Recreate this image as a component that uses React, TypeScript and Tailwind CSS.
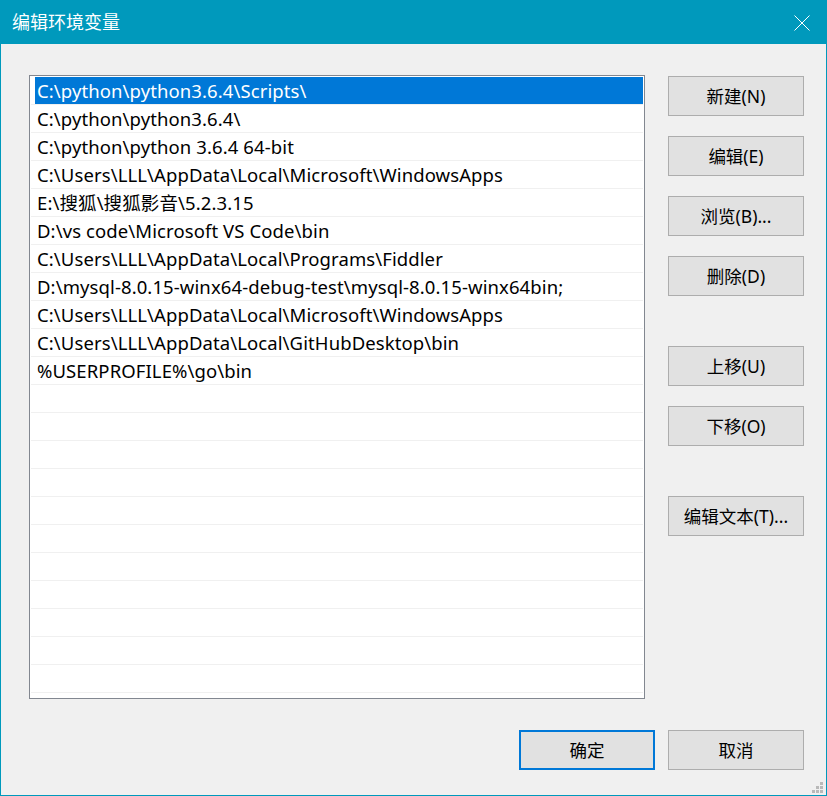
import * as React from 'react';

// Windows "编辑环境变量" dialog

const paths = [
  'C:\\python\\python3.6.4\\Scripts\\',
  'C:\\python\\python3.6.4\\',
  'C:\\python\\python 3.6.4 64-bit',
  'C:\\Users\\LLL\\AppData\\Local\\Microsoft\\WindowsApps',
  'E:\\搜狐\\搜狐影音\\5.2.3.15',
  'D:\\vs code\\Microsoft VS Code\\bin',
  'C:\\Users\\LLL\\AppData\\Local\\Programs\\Fiddler',
  'D:\\mysql-8.0.15-winx64-debug-test\\mysql-8.0.15-winx64bin;',
  'C:\\Users\\LLL\\AppData\\Local\\Microsoft\\WindowsApps',
  'C:\\Users\\LLL\\AppData\\Local\\GitHubDesktop\\bin',
  '%USERPROFILE%\\go\\bin',
];

const TOTAL_ROWS = 22;

const font = { fontFamily: '"Noto Sans", "Noto Sans CJK SC", sans-serif' };

const Btn: React.FC<{ label: string; primary?: boolean }> = ({ label, primary }) => (
  <button
    className={`w-[136px] h-[40px] flex items-center justify-center bg-[#e1e1e1] text-[17.5px] text-black ${
      primary ? 'border-2 border-[#0078d7]' : 'border border-[#adadad]'
    }`}
  >
    {label}
  </button>
);

const App: React.FC = () => {
  const rows = Array.from({ length: TOTAL_ROWS }, (_, i) => paths[i] ?? '');

  return (
    <div className="w-[827px] h-[796px] flex flex-col bg-[#f0f0f0] border-x border-b border-[#0099bc]" style={font}>
      {/* Title bar */}
      <div className="h-[44px] -mx-px bg-[#0099bc] flex items-center justify-between pl-[12px] pr-[17px] shrink-0">
        <span className="text-white text-[18px] leading-none">编辑环境变量</span>
        <svg width="16" height="16" viewBox="0 0 16 16" className="mt-[1px]">
          <path d="M0.5 0.5 L15.5 15.5 M15.5 0.5 L0.5 15.5" stroke="white" strokeWidth="1" fill="none" />
        </svg>
      </div>

      {/* Body */}
      <div className="flex-1 flex flex-col pl-[28px] pr-[22px] pt-[31px]">
        <div className="flex">
          {/* Path list */}
          <div className="w-[616px] h-[624px] bg-white border border-[#828790] pt-px pl-px pr-px overflow-hidden">
            {rows.map((p, i) => (
              <div key={i} className="h-[28px] border-b border-[#f0f0f0] flex">
                <div
                  className={`flex-1 ml-[4px] pl-[2px] flex items-center text-[18.5px] tracking-[0.1px] whitespace-nowrap ${
                    i === 0 ? 'bg-[#0078d7] text-white' : 'text-black'
                  }`}
                >
                  {p}
                </div>
              </div>
            ))}
          </div>

          {/* Side buttons */}
          <div className="ml-auto mt-[1px] flex flex-col">
            <div className="flex flex-col gap-[20px]">
              <Btn label="新建(N)" />
              <Btn label="编辑(E)" />
              <Btn label="浏览(B)..." />
              <Btn label="删除(D)" />
            </div>
            <div className="flex flex-col gap-[20px] mt-[50px]">
              <Btn label="上移(U)" />
              <Btn label="下移(O)" />
            </div>
            <div className="mt-[50px]">
              <Btn label="编辑文本(T)..." />
            </div>
          </div>
        </div>

        {/* Bottom buttons */}
        <div className="flex justify-end gap-[13px] mt-[31px]">
          <Btn label="确定" primary />
          <Btn label="取消" />
        </div>

        {/* Resize grip */}
        <div className="flex-1 flex justify-end items-end -mr-[20px] pb-[1px]">
          <svg width="12" height="12" viewBox="0 0 12 12">
            <rect x="8" y="0" width="3" height="3" fill="#b9b9b9" />
            <rect x="4" y="4" width="3" height="3" fill="#b9b9b9" />
            <rect x="8" y="4" width="3" height="3" fill="#b9b9b9" />
            <rect x="0" y="8" width="3" height="3" fill="#b9b9b9" />
            <rect x="4" y="8" width="3" height="3" fill="#b9b9b9" />
            <rect x="8" y="8" width="3" height="3" fill="#b9b9b9" />
          </svg>
        </div>
      </div>
    </div>
  );
};

export default App;
